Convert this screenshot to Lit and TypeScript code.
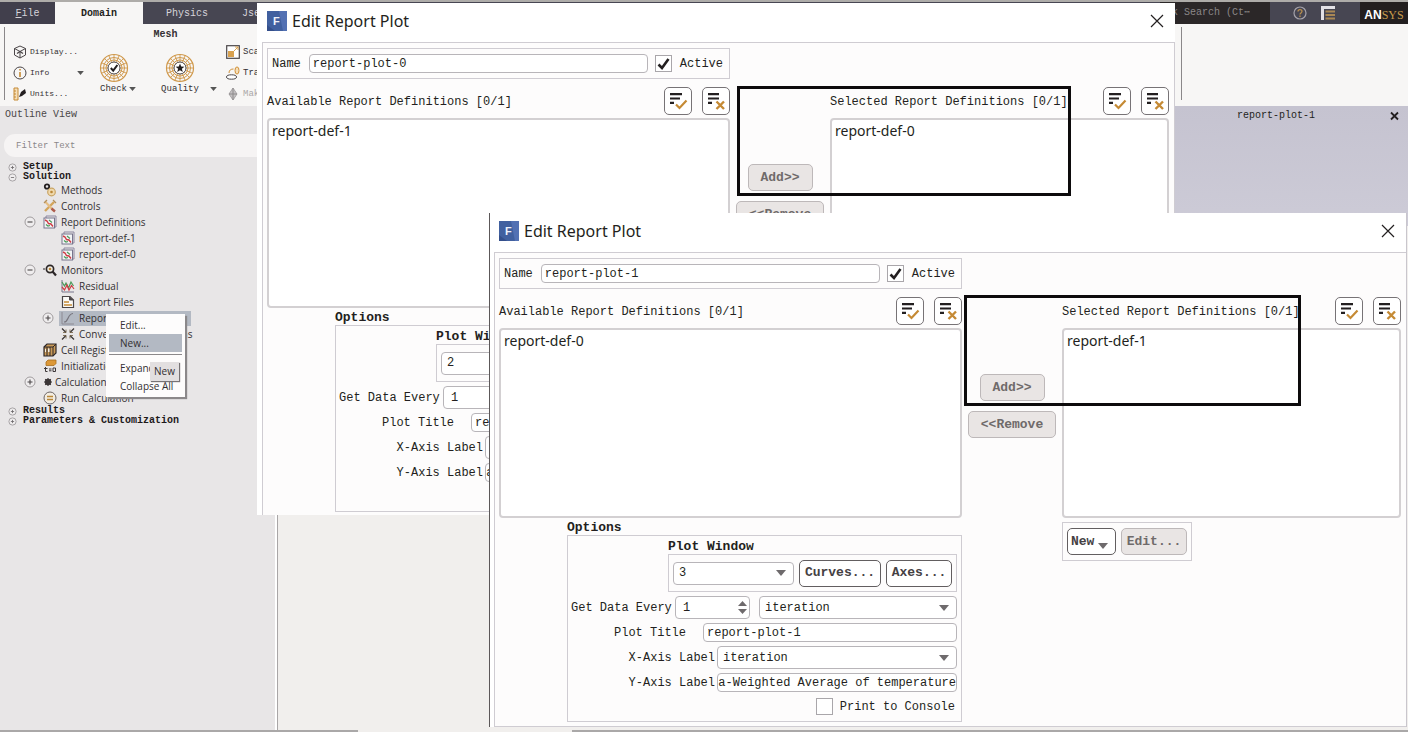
import { LitElement, html, svg, css, nothing } from "lit";
import { customElement, property } from "lit/decorators.js";
import { classMap } from "lit/directives/class-map.js";

const shared = css`
  *, *::before, *::after { box-sizing: border-box; }
  button, input, select { font: inherit; color: inherit; margin: 0; padding: 0; min-width: 0; }
  button { cursor: pointer; }
  svg { display: block; flex: none; }
`;

const caret = html`<svg class="caret" width="10" height="6" viewBox="0 0 10 6" aria-hidden="true"><path d="M0 0H10L5 6Z" fill="#6e6a6c"/></svg>`;

const checkAllIcon = svg`<svg width="20" height="20" viewBox="0 0 20 20" aria-hidden="true">
  <path d="M2 3.2H14M2 7.5H12M2 11.8H6" stroke="#231f20" stroke-width="2.2"/>
  <path d="M8 13.5L11.5 17L18.5 9.5" fill="none" stroke="#c58a34" stroke-width="2.2"/></svg>`;
const clearAllIcon = svg`<svg width="20" height="20" viewBox="0 0 20 20" aria-hidden="true">
  <path d="M2 3.2H13M2 7.5H13M2 11.8H6" stroke="#231f20" stroke-width="2.2"/>
  <path d="M10.5 10.5L18 18M18 10.5L10.5 18" stroke="#c58a34" stroke-width="2.4"/></svg>`;

@customElement("report-plot-dialog")
export class ReportPlotDialog extends LitElement {
  @property() name = "";
  @property() available = "";
  @property() selected = "";
  @property() plotWindow = "";
  @property({ type: Boolean, reflect: true }) front = false;

  static styles = [shared, css`
    :host {
      display: block; background: #fff; color: #231f20; border-left: 1px solid #fff;
      font: 12px/14px "Liberation Mono", monospace;
    }
    :host([front]) { border-left-color: #5c5859; border-right: 1px solid #c9c6cd; }
    .title { display: flex; align-items: center; gap: 5px; height: 39px; padding: 0 8px 4px 9px; font: 16px/20px "Noto Sans", sans-serif; }
    .title h2 { flex: 1; margin: 0; font: inherit; }
    .close { border: 0; background: none; padding: 3px; }
    .body {
      display: grid; grid-template-columns: minmax(0, 463fr) 100px minmax(0, 339fr);
      margin-left: 4px; padding: 5px 5px 3px 4px; border: solid #cfccd2; border-width: 1px 1px 0; background: #fdfcfc;
    }
    :host([front]) .body { padding-bottom: 4px; border-right: 0; border-bottom-width: 1px; }
    .name { grid-column: 1; display: flex; align-items: center; height: 31px; padding: 0 6px 0 4px; border: 1px solid #cfccd2; }
    .name .field { flex: 1; margin: 0 7px 0 8px; }
    .name .tick { margin-right: 8px; }
    .field { height: 19px; border: 1px solid #b8b5b9; border-radius: 4px; background: #fff; padding: 0 3px; }
    .tick { display: grid; width: 17px; height: 17px; }
    .tick > * { grid-area: 1 / 1; }
    .tick input { appearance: none; border: 1px solid #a9a6aa; background: #fff; }
    .tick svg { place-self: center; pointer-events: none; }
    .head { display: flex; align-items: center; gap: 10px; height: 28px; margin: 8px 0 3px; }
    .head span { flex: 1; white-space: nowrap; padding-top: 2px; }
    .icon { display: grid; place-items: center; width: 28px; height: 28px; border: 1px solid #777376; border-radius: 5px; background: #fff; }
    .left { grid-column: 1; }
    .right { grid-column: 3; }
    .list { height: 190px; margin: 0; padding: 1px 3px; list-style: none; border: 2px solid #d3d0d2; border-radius: 4px; background: #fff; font: 14px/20px "Noto Sans", sans-serif; }
    .moves { display: flex; flex-direction: column; align-items: center; gap: 10px; padding-top: 46px; }
    .btn { height: 27px; border: 1px solid #625e60; border-radius: 5px; background: #fff; font-size: 13px; font-weight: bold; color: #454143; white-space: nowrap; }
    .btn:disabled { border-color: #bdb8b9; background: #e9e5e4; color: #6f6a6a; }
    .add { width: 65px; }
    .remove { width: 88px; }
    .options { grid-column: 1; margin: 3px 0 0 68px; min-width: 0; }
    h3 { margin: 0; font-size: 13px; line-height: 14px; }
    .frame { border: 1px solid #cfccd2; }
    .rows { display: flex; flex-direction: column; gap: 4px; padding: 4px 4px 6px 3px; }
    .window { margin-left: 97px; }
    .window .frame { display: flex; align-items: center; gap: 5px; height: 38px; padding: 0 4px; }
    .drop { display: grid; flex: 1; min-width: 0; height: 23px; }
    .drop > * { grid-area: 1 / 1; }
    .drop select { appearance: none; width: 100%; border: 1px solid #b8b5b9; border-radius: 4px; background: #fff; padding: 0 5px; }
    .drop .caret { place-self: center end; margin-right: 8px; pointer-events: none; }
    .curves { width: 82px; }
    .axes { width: 66px; }
    .row { display: flex; align-items: center; }
    .row .field { flex: 1; }
    .every { flex: none; width: 104px; white-space: nowrap; }
    .plot-title { width: 132px; padding-right: 17px; text-align: right; }
    .axis { width: 146px; padding-right: 2px; text-align: right; }
    .row .tight { padding: 0; text-align: right; }
    .spin { display: flex; width: 75px; height: 23px; margin-right: 9px; padding: 0 2px 0 7px; border: 1px solid #b8b5b9; border-radius: 4px; background: #fff; }
    .spin input { flex: 1; appearance: textfield; border: 0; background: none; }
    .spin input::-webkit-inner-spin-button { display: none; }
    .spin div { display: flex; flex-direction: column; justify-content: space-evenly; }
    .spin button { border: 0; background: none; }
    .print { justify-content: flex-end; gap: 7px; padding: 2px 2px 0 0; }
    .tools { grid-column: 3; justify-self: start; align-self: start; display: flex; gap: 5px; margin-top: 4px; padding: 5px 4px; }
    .new { display: flex; align-items: center; gap: 4px; width: 49px; padding: 0 3px; }
    .new .caret { margin-top: 9px; }
    .edit { width: 66px; }
  `];

  private head(side: string, text: string) {
    return html`<div class="head ${side}"><span>${text} [0/1]</span>
      <button class="icon" aria-label="Select all">${checkAllIcon}</button>
      <button class="icon" aria-label="Clear selection">${clearAllIcon}</button></div>`;
  }

  private drop(label: string, id: string, value: string) {
    return html`<div class="drop"><select id=${id} aria-label=${label}><option>${value}</option></select>${caret}</div>`;
  }

  render() {
    return html`
      <div class="title">
        <svg width="20" height="20" viewBox="0 0 20 20" aria-hidden="true">
          <rect width="20" height="20" fill="#41609f"/><path d="M12 0H20V20H16Z" fill="#5371b3"/><path d="M0 14L8 20H0Z" fill="#344f8b"/>
          <text x="6" y="14" font-family="Liberation Sans" font-size="11" font-weight="bold" fill="#eef2fb">F</text></svg>
        <h2>Edit Report Plot</h2>
        <button class="close" aria-label="Close"><svg width="14" height="14" viewBox="0 0 14 14"><path d="M1 1L13 13M13 1L1 13" stroke="#231f20" stroke-width="1.2"/></svg></button>
      </div>
      <div class="body">
        <div class="name">
          <label for="name">Name</label>
          <input class="field" id="name" .value=${this.name}>
          <div class="tick"><input type="checkbox" id="active" checked>
            <svg width="13" height="13" viewBox="0 0 13 13"><path d="M1.5 7.5L5 11L11.5 2" fill="none" stroke="#231f20" stroke-width="2.6"/></svg></div>
          <label for="active">Active</label>
        </div>
        ${this.head("left", "Available Report Definitions")}
        ${this.head("right", "Selected Report Definitions")}
        <ul class="list left" role="listbox" aria-label="Available"><li role="option">${this.available}</li></ul>
        <div class="moves">
          <button class="btn add" disabled>Add&gt;&gt;</button>
          <button class="btn remove" disabled>&lt;&lt;Remove</button>
        </div>
        <ul class="list" role="listbox" aria-label="Selected"><li role="option">${this.selected}</li></ul>
        <section class="options">
          <h3>Options</h3>
          <div class="frame rows">
            <div class="window">
              <h3>Plot Window</h3>
              <div class="frame">
                ${this.drop("Plot Window", "window", this.plotWindow)}
                <button class="btn curves">Curves...</button>
                <button class="btn axes">Axes...</button>
              </div>
            </div>
            <div class="row">
              <label class="every" for="every">Get Data Every</label>
              <div class="spin"><input id="every" type="number" value="1"><div>
                <button aria-label="Increase"><svg width="9" height="5" viewBox="0 0 9 5"><path d="M0 5H9L4.5 0Z" fill="#6e6a6c"/></svg></button>
                <button aria-label="Decrease"><svg width="9" height="5" viewBox="0 0 9 5"><path d="M0 0H9L4.5 5Z" fill="#6e6a6c"/></svg></button>
              </div></div>
              ${this.drop("Interval unit", "unit", "iteration")}
            </div>
            <div class="row"><label class="plot-title" for="title">Plot Title</label><input class="field" id="title" .value=${this.name}></div>
            <div class="row"><label class="axis" for="x">X-Axis Label</label>${this.drop("X-Axis Label", "x", "iteration")}</div>
            <div class="row"><label class="axis" for="y">Y-Axis Label</label><input class="field tight" id="y" value="a-Weighted Average of temperature"></div>
            <div class="row print">
              <div class="tick"><input type="checkbox" id="print"></div>
              <label for="print">Print to Console</label>
            </div>
          </div>
        </section>
        <div class="frame tools">
          <button class="btn new">New ${caret}</button>
          <button class="btn edit" disabled>Edit...</button>
        </div>
      </div>`;
  }
}

const reportGlyph = svg`<path d="M3 3V1H13V12H12" fill="none" stroke="#8d88a0"/><rect x="1" y="3" width="10.5" height="10" fill="#f3f4f6" stroke="#77758c"/>
  <path d="M2 5L4 6L5.5 8.5L8 9L10 11.5" fill="none" stroke="#cf3b45" stroke-width="1.4"/><path d="M3 9.5L5 11L7 10.5M6 5L9 7.5" fill="none" stroke="#4a9a5a" stroke-width="1.2"/>`;

const glyphs: Record<string, unknown> = {
  methods: svg`<circle cx="4" cy="3.5" r="2.2" fill="none" stroke="#231f20" stroke-width="1.8"/><circle cx="8.5" cy="9" r="3.8" fill="#efd9ae" stroke="#c9a463" stroke-width="1.2"/><circle cx="8.5" cy="9" r="1.3" fill="#b98738"/>`,
  controls: svg`<path d="M2 12L11 3" stroke="#d3a55c" stroke-width="2.4"/><path d="M2 2.5L11 12" stroke="#e5bd83" stroke-width="2.2"/><path d="M8.5 9.5L12 12.5" stroke="#ad5b4d" stroke-width="2.4"/><path d="M1 4L4 1M10 1L13 4" stroke="#b3905c" stroke-width="1.3"/>`,
  report: reportGlyph,
  monitors: svg`<circle cx="7" cy="6" r="3.6" fill="#f4efe6" stroke="#2c2728" stroke-width="1.7"/><path d="M9.5 8.5L13 12.5" stroke="#2c2728" stroke-width="2.2"/><circle cx="7" cy="6" r="1.3" fill="#b98738"/><path d="M0 6H2" stroke="#2c2728"/>`,
  residual: svg`<path d="M1 1V13H13" fill="none" stroke="#77758c"/><path d="M1 3L3.5 7L5 4L7.5 9L10 3L12.5 7" fill="none" stroke="#4a9a5a" stroke-width="1.2"/><path d="M1 8L3.5 11L6 6L8 11L10.5 6.5L13 10" fill="none" stroke="#cf3b45" stroke-width="1.2"/>`,
  files: svg`<path d="M1.5 1.5H9L12.5 5V12.5H1.5Z" fill="#fbfaf8" stroke="#4b4648" stroke-width="1.2"/><path d="M8.5 1.5V5H12.5" fill="#4b4648" stroke="#4b4648"/><path d="M3 7H8M3 10H11" stroke="#c58a34" stroke-width="1.5"/>`,
  plots: svg`<path d="M1 1V13H13" fill="none" stroke="#8d8a93"/><path d="M3 11C8 11 6 3 12 2.5" fill="none" stroke="#77747c" stroke-width="1.2"/>`,
  converge: svg`<path d="M1 1.5L5 5.5M13 1.5L9 5.5M1 12.5L5 8.5M13 12.5L9 8.5" stroke="#3c3738" stroke-width="1.3"/><path d="M5 2.5V5.5H2M9 2.5V5.5H12M5 11.5V8.5H2M9 11.5V8.5H12" fill="none" stroke="#6d5a3c" stroke-width=".8"/>`,
  cell: svg`<path d="M1 4L4 1H13V10L10 13H1Z" fill="#c99a58" stroke="#2c2728" stroke-width="1.2"/><path d="M1 4H10V13M10 4L13 1M4 4V13M7 4V13" fill="none" stroke="#2c2728"/><path d="M5 5.5H6.5V9H5ZM2 6H3V9H2Z" fill="#f6efe3"/>`,
  init: svg`<path d="M3 3L5 1H13V4.5L11 6.5H3Z" fill="#dc9838" stroke="#a86e20" stroke-width=".8"/><path d="M2.5 8V12.5H4.5M1 9.5H4.5M6 10H8.5M6 11.8H8.5M10 9H12.5V12.5H10Z" fill="none" stroke="#3c3738"/>`,
  calc: svg`<circle cx="5" cy="7" r="3.2" fill="#3b3637"/><path d="M5 3V11M1 7H9M2.2 4.2L7.8 9.8M7.8 4.2L2.2 9.8" stroke="#3b3637" stroke-width="1.1"/>`,
  run: svg`<circle cx="7" cy="7" r="6" fill="#f3ece0" stroke="#6b6566"/><path d="M4 5.5H10M4 8.5H10" stroke="#b98738" stroke-width="1.4"/>`,
};

interface Node { text: string; level: number; icon?: string; toggle?: "+" | "-"; active?: boolean; }
const tree: Node[] = [
  { text: "Setup", level: 0, toggle: "+" },
  { text: "Solution", level: 0, toggle: "-" },
  { text: "Methods", level: 1, icon: "methods" },
  { text: "Controls", level: 1, icon: "controls" },
  { text: "Report Definitions", level: 1, icon: "report", toggle: "-" },
  { text: "report-def-1", level: 2, icon: "report" },
  { text: "report-def-0", level: 2, icon: "report" },
  { text: "Monitors", level: 1, icon: "monitors", toggle: "-" },
  { text: "Residual", level: 2, icon: "residual" },
  { text: "Report Files", level: 2, icon: "files" },
  { text: "Report Plots", level: 2, icon: "plots", toggle: "+", active: true },
  { text: "Convergence Conditions", level: 2, icon: "converge" },
  { text: "Cell Registers", level: 1, icon: "cell" },
  { text: "Initialization", level: 1, icon: "init" },
  { text: "Calculation Activities", level: 1, icon: "calc", toggle: "+" },
  { text: "Run Calculation", level: 1, icon: "run" },
  { text: "Results", level: 0, toggle: "+" },
  { text: "Parameters & Customization", level: 0, toggle: "+" },
];

const dial = (mark: unknown) => svg`<svg width="30" height="30" viewBox="0 0 30 30" aria-hidden="true">
  <g fill="none" stroke="#d09a4e"><circle cx="15" cy="15" r="13.5" stroke-width="1.2"/><circle cx="15" cy="15" r="10.5"/><circle cx="15" cy="15" r="8"/>
  <path d="M15 1V29M1 15H29M5 5L25 25M25 5L5 25M9.6 2L20.4 28M20.4 2L9.6 28M2 9.6L28 20.4M28 9.6L2 20.4" stroke-width=".9"/></g>
  <circle cx="15" cy="15" r="6" fill="#fff" stroke="#4b4648"/>${mark}</svg>`;

@customElement("app-root")
export class AppRoot extends LitElement {
  static styles = [shared, css`
    :host {
      display: flex; flex-direction: column; position: relative; height: 100vh; overflow: hidden;
      background: #f1efed; color: #343032; font: 10px/12px "Liberation Mono", monospace;
    }
    .tabs { display: flex; flex: none; height: 24px; border-top: 2px solid #aeaca9; background: #474652; color: #d6d4da; }
    .tab { border: 0; background: none; text-align: center; padding-top: 2px; }
    .file { width: 55px; background: #413f4c; }
    .domain { width: 88px; background: #f7f6f5; color: #231f20; font-weight: bold; }
    .physics { width: 88px; }
    .user { width: 60px; padding-left: 11px; text-align: left; }
    .first { text-decoration: underline; }
    .search { width: 110px; margin-left: auto; border: 0; background: #2b2728; text-align: right; padding-right: 20px; }
    .search::placeholder { color: #8b8789; }
    .corner { display: flex; align-items: center; gap: 14px; width: 90px; padding-left: 23px; }
    .brand { display: flex; align-items: center; justify-content: center; width: 48px; padding-top: 3px; background: #231f20; color: #fff; font: bold 12px/18px "Liberation Sans", sans-serif; }
    .brand b { color: #c79a4a; font: 12px/18px "Liberation Serif", serif; }
    .ribbon { display: flex; flex: none; height: 82px; padding: 3px 0 6px 4px; background: #f7f6f5; font-size: 9px; }
    .mesh { width: 322px; border-left: 1px solid #8a8789; }
    .mesh h3 { margin: 2px 0 3px; font-size: 10px; line-height: 12px; text-align: center; }
    .groups { display: flex; }
    .stack { display: flex; flex-direction: column; gap: 5px; }
    .stack button { display: flex; align-items: center; gap: 3px; height: 16px; border: 0; background: none; white-space: nowrap; font-size: 8px; }
    .cmds { width: 73px; margin-left: 8px; }
    .cmds .caret { margin-left: 25px; }
    .more { margin-left: 8px; }
    .more button { font-size: 9px; }
    .more .dim { color: #aaa7a8; }
    .big { display: flex; flex-direction: column; align-items: center; width: 56px; padding-top: 9px; border: 0; background: none; line-height: 12px; }
    .big span { display: flex; align-items: center; gap: 2px; padding-left: 8px; }
    .quality { width: 76px; }
    .quality span { gap: 11px; padding-left: 18px; }
    .end { flex: 1; margin-left: 855px; border-left: 1px solid #8a8789; }
    .main { display: flex; flex: 1; min-height: 0; }
    .outline { flex: none; width: 278px; border-right: 1px solid #a9a6a7; box-shadow: inset -2px 0 #fff; background: #e8e6e7; }
    .outline h2 { margin: 0; padding: 3px 5px 13px; font: inherit; color: #4a4648; }
    .filter { display: block; width: 269px; height: 23px; margin-left: 4px; padding: 0 12px; border: 0; border-radius: 11px; background: #f6f4f4; font-size: 9px; }
    .filter::placeholder { color: #8b8789; }
    .tree { margin: 5px 0 0; padding: 0; list-style: none; }
    .tree li { display: flex; align-items: center; height: 16px; font: 10px/16px "Open Sans", "Noto Sans", sans-serif; white-space: nowrap; }
    .tree .l0 { height: 10px; gap: 6px; padding-left: 8px; font: bold 10px/10px "Liberation Mono", monospace; color: #1d191a; }
    .l1 { padding-left: 24px; }
    .l2 { padding-left: 42px; }
    .slot { width: 18px; flex: none; }
    .item { display: flex; align-items: center; gap: 4px; height: 15px; padding-left: 1px; }
    .calc { gap: 0; }
    .calc svg { margin-right: -2px; }
    .active .item { width: 132px; margin-left: -1px; padding-left: 2px; background: #b3b9c3; }
    .plot { display: flex; align-items: flex-start; width: 240px; height: 120px; margin-left: auto; padding: 4px 9px 0 69px; background: linear-gradient(#c5c3d0, #cdcbd7); color: #231f20; }
    .plot span { flex: 1; }
    .plot button { border: 0; background: none; }
    .foot { flex: none; height: 2px; background: linear-gradient(90deg, #aaa8a8 0 358px, #f1efed 358px 572px, #aaa8a8 572px); }
    .dialog { position: absolute; width: calc(100% - 490px); }
    .d1 { left: 257px; top: 3px; }
    .d2 { left: 489px; top: 213px; }
    .mark { position: absolute; border: 3px solid #0d0b0c; pointer-events: none; }
    .m1 { left: 737px; top: 86px; width: 334px; height: 110px; }
    .m2 { left: 964px; top: 295px; width: 337px; height: 111px; }
    .menu { position: absolute; left: 106px; top: 314px; width: 79px; padding: 2px 3px; background: #fdfcfc; box-shadow: 2px 2px 1px #8b888a; font: 10px/18px "Open Sans", "Noto Sans", sans-serif; }
    .menu button { display: block; width: 100%; padding-left: 11px; border: 0; background: none; text-align: left; }
    .menu .hot { background: #b3b9c3; }
    .menu hr { margin: 2px 0 4px; border: 0; border-top: 1px solid #8b888a; }
    .tip { position: absolute; left: 150px; top: 362px; padding: 0 4px; background: #e2dfe0; box-shadow: 1px 1px 1px #777375; font: 10px/19px "Open Sans", "Noto Sans", sans-serif; }
  `];

  private node(n: Node) {
    const toggle = n.toggle
      ? html`<svg width="12" height="12" viewBox="-6 -6 12 12" aria-hidden="true"><circle r="5" fill="#efedee" stroke="#979395" stroke-width=".9"/>
          <path d=${n.toggle === "+" ? "M-2.5 0H2.5M0 -2.5V2.5" : "M-2.5 0H2.5"} stroke="#4a4648" stroke-width="1.1"/></svg>`
      : nothing;
    if (n.level === 0) return html`<li class="l0"><svg width="9" height="9" viewBox="-4.5 -4.5 9 9" aria-hidden="true"><circle r="3.6" fill="#efedee" stroke="#979395" stroke-width=".8"/>
      <path d=${n.toggle === "+" ? "M-1.6 0H1.6M0 -1.6V1.6" : "M-1.6 0H1.6"} stroke="#6a6668" stroke-width=".8"/></svg>${n.text}</li>`;
    return html`<li class=${classMap({ l1: n.level === 1, l2: n.level === 2, active: !!n.active })}>
      <span class="slot">${toggle}</span>
      <span class="item ${n.icon === "calc" ? "calc" : ""}"><svg width="14" height="14" viewBox="0 0 14 14" aria-hidden="true">${glyphs[n.icon!]}</svg>${n.text}</span></li>`;
  }

  render() {
    return html`
      <nav class="tabs">
        <button class="tab file"><span class="first">F</span>ile</button>
        <button class="tab domain">Domain</button>
        <button class="tab physics">Physics</button>
        <button class="tab user">Jser</button>
        <input class="search" aria-label="Quick Search" placeholder="k Search (Ct⋯">
        <div class="corner">
          <svg width="14" height="14" viewBox="0 0 14 14"><circle cx="7" cy="7" r="6" fill="none" stroke="#a5a2aa" stroke-width="1.2"/><path d="M5 5.5C5 3 9 3 9 5.3C9 7 7 6.8 7 8.5M7 9.6V11" fill="none" stroke="#b98f4e" stroke-width="1.3"/></svg>
          <svg width="15" height="14" viewBox="0 0 15 14"><path d="M0 1.5H14" stroke="#e3e1e6" stroke-width="3"/><path d="M1.5 3V14" stroke="#e3e1e6" stroke-width="3"/><path d="M4.5 5.5H14M4.5 9H14M4.5 12.5H14" stroke="#a98754" stroke-width="2"/></svg>
        </div>
        <div class="brand">AN<b>SYS</b></div>
      </nav>
      <div class="ribbon">
        <section class="mesh">
          <h3>Mesh</h3>
          <div class="groups">
            <div class="stack cmds">
              <button><svg width="14" height="14" viewBox="0 0 14 14"><path d="M7 1L12.5 3.5V10L7 13L1.5 10V3.5ZM1.5 3.5L7 6.5L12.5 3.5M7 6.5V13" fill="none" stroke="#4b4648"/><path d="M4 8.5L7 6.5L10 8.5" fill="none" stroke="#4b4648" stroke-width="1.4"/></svg>Display...</button>
              <button><svg width="14" height="14" viewBox="0 0 14 14"><circle cx="7" cy="7" r="6" fill="none" stroke="#4b4648"/><path d="M7 6V11M7 3V4.5" stroke="#c58a34" stroke-width="1.6"/></svg>Info <svg class="caret" width="7" height="4" viewBox="0 0 10 6"><path d="M0 0H10L5 6Z" fill="#555"/></svg></button>
              <button><svg width="14" height="14" viewBox="0 0 14 14"><path d="M1 1H5V13H1ZM1 4H3M1 7H3M1 10H3" fill="#f5dfba" stroke="#c58a34"/><path d="M6 10L8 5L12 2L13 6L9 9Z" fill="#231f20"/></svg>Units...</button>
            </div>
            <button class="big">${dial(svg`<path d="M11.8 15L14.2 17.6L18.4 12" fill="none" stroke="#231f20" stroke-width="2"/>`)}
              <span>Check <svg width="7" height="4" viewBox="0 0 10 6"><path d="M0 0H10L5 6Z" fill="#555"/></svg></span></button>
            <button class="big quality">${dial(svg`<path d="M15 10.5L16.2 13.6L19.4 13.7L16.9 15.8L17.8 19L15 17.2L12.2 19L13.1 15.8L10.6 13.7L13.8 13.6Z" fill="#231f20"/>`)}
              <span>Quality <svg width="7" height="4" viewBox="0 0 10 6"><path d="M0 0H10L5 6Z" fill="#555"/></svg></span></button>
            <div class="stack more">
              <button><svg width="14" height="14" viewBox="0 0 14 14"><rect x=".7" y=".7" width="12.6" height="12.6" fill="#fff" stroke="#4b4648" stroke-width="1.2"/><path d="M2 6H8V12H2Z" fill="#d8a14f"/><path d="M8 6L12 2M9 2H12V5" fill="none" stroke="#d8a14f"/></svg>Scale...</button>
              <button><svg width="14" height="14" viewBox="0 0 14 14"><ellipse cx="5.5" cy="11" rx="5" ry="2.2" fill="#fff" stroke="#4b4648"/><ellipse cx="11" cy="4.5" rx="2" ry="3.6" fill="#f5dfba" stroke="#d08f35"/><path d="M3 7C3 4 5 3 7.5 3" fill="none" stroke="#d08f35"/></svg>Transform</button>
              <button class="dim"><svg width="14" height="14" viewBox="0 0 14 14"><path d="M7 1L11 7L7 13L3 7Z" fill="#c5c2c3" stroke="#a8a5a6"/><path d="M7 1V13M3 7H11" stroke="#8e8b8c"/></svg>Make Polyhedra</button>
            </div>
          </div>
        </section>
        <div class="end"></div>
      </div>
      <div class="main">
        <aside class="outline">
          <h2>Outline View</h2>
          <input class="filter" aria-label="Filter" placeholder="Filter Text">
          <ul class="tree">${tree.map((n) => this.node(n))}</ul>
        </aside>
        <section class="plot"><span>report-plot-1</span>
          <button aria-label="Close plot"><svg width="9" height="12" viewBox="0 0 9 12"><path d="M1 2.5L8 9.5M8 2.5L1 9.5" stroke="#231f20" stroke-width="1.8"/></svg></button></section>
      </div>
      <div class="foot"></div>
      <div class="menu">
        <button>Edit...</button><button class="hot">New...</button><hr>
        <button>Expand All</button><button>Collapse All</button>
      </div>
      <div class="tip">New</div>
      <report-plot-dialog class="dialog d1" name="report-plot-0" available="report-def-1" selected="report-def-0" plotWindow="2"></report-plot-dialog>
      <div class="mark m1"></div>
      <report-plot-dialog front class="dialog d2" name="report-plot-1" available="report-def-0" selected="report-def-1" plotWindow="3"></report-plot-dialog>
      <div class="mark m2"></div>`;
  }
}
